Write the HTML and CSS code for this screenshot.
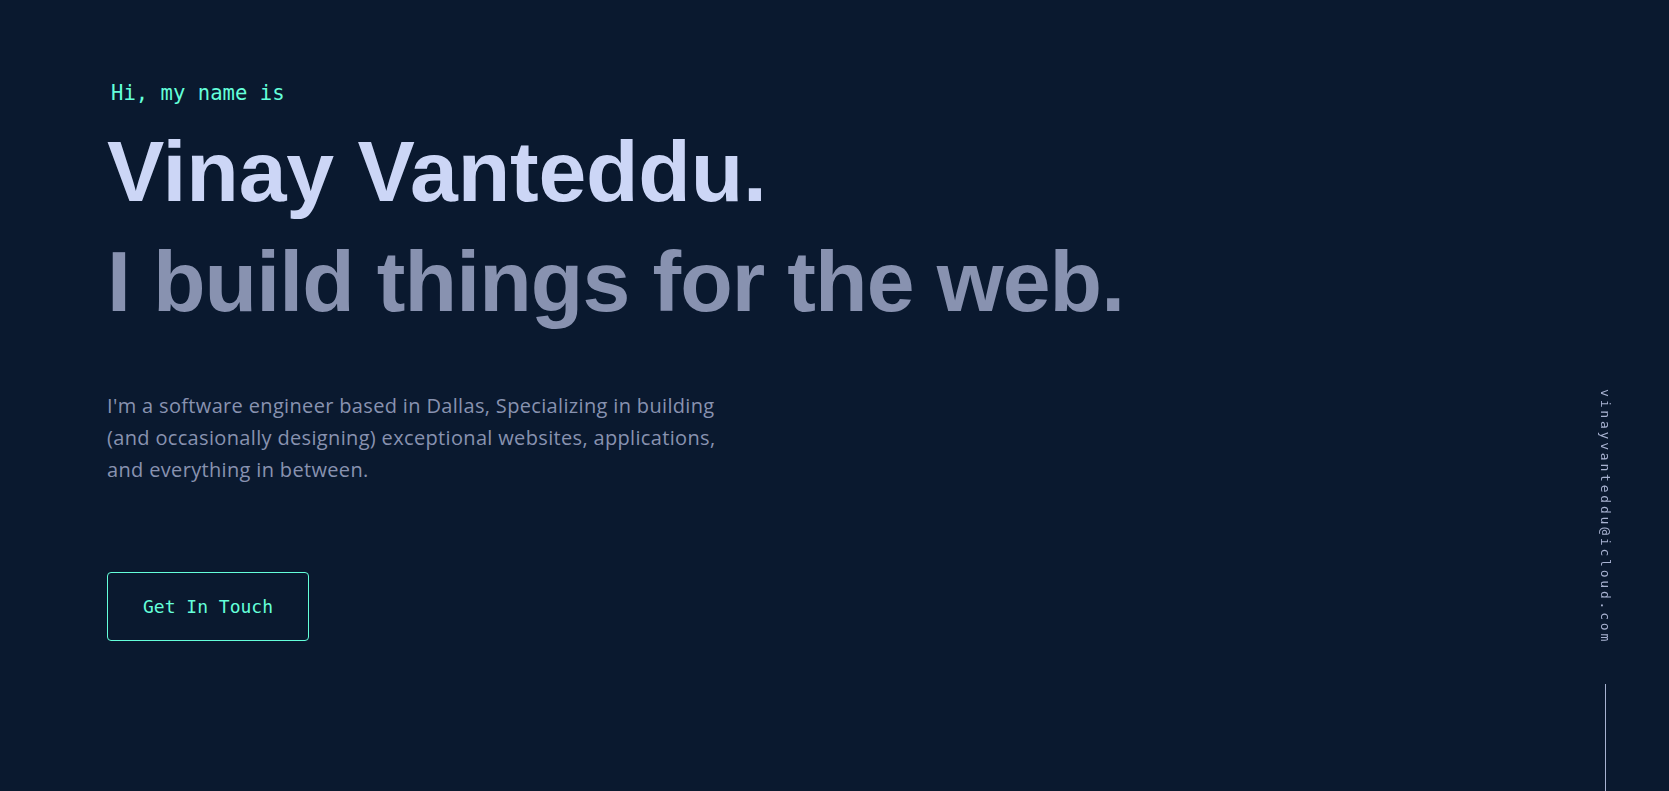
FILE: index.html
```html
<!DOCTYPE html>
<html lang="en">
<head>
<meta charset="utf-8">
<title>Vinay Vanteddu</title>
<link rel="stylesheet" href="styles.css">
</head>
<body>
<main class="hero">
  <h1 class="hero-intro">Hi, my name is</h1>
  <h2 class="big-heading name">Vinay Vanteddu.</h2>
  <h3 class="big-heading tagline">I build things for the web.</h3>
  <p class="hero-text">I'm a software engineer based in Dallas, Specializing in building (and occasionally designing) exceptional websites, applications, and everything in between.</p>
  <a class="contact-btn" href="#contact">Get In Touch</a>
</main>
<aside class="side-email">
  <a class="email-link" href="#">vinayvanteddu@icloud.com</a>
</aside>
</body>
</html>
```

FILE: styles.css
```css
html, body {
  margin: 0;
  padding: 0;
}

body {
  background: #0a192f;
  min-height: 100vh;
  overflow: hidden;
  font-family: "Liberation Sans", Arial, sans-serif;
  color: #8892b0;
}

.hero {
  display: flex;
  flex-direction: column;
  align-items: flex-start;
  padding: 80px 0 0 107px;
}

.hero-intro {
  margin: 0 0 10px 4px;
  font-family: "DejaVu Sans Mono", monospace;
  font-weight: 400;
  font-size: 20.6px;
  line-height: 26px;
  color: #64ffda;
}

.big-heading {
  margin: 0;
  font-family: "Liberation Sans", Arial, sans-serif;
  font-weight: 700;
  font-size: 86px;
  line-height: 110px;
}

.name {
  color: #ccd6f6;
  letter-spacing: -0.2px;
}

.tagline {
  color: #8892b0;
  letter-spacing: -0.9px;
}

.hero-text {
  margin: 54px 0 0 0;
  max-width: 640px;
  font-family: "Open Sans", sans-serif;
  font-size: 20px;
  line-height: 32px;
  letter-spacing: 0.34px;
  color: #8892b0;
}

.contact-btn {
  margin-top: 86px;
  padding: 23px 35px;
  border: 1px solid #64ffda;
  border-radius: 4px;
  font-family: "DejaVu Sans Mono", monospace;
  font-size: 18px;
  line-height: 21px;
  color: #64ffda;
  text-decoration: none;
}

.side-email {
  position: fixed;
  right: 44px;
  bottom: 0;
  width: 40px;
  display: flex;
  flex-direction: column;
  align-items: center;
}

.email-link {
  writing-mode: vertical-rl;
  font-family: "DejaVu Sans Mono", monospace;
  font-size: 13px;
  line-height: 18px;
  letter-spacing: 2.8px;
  color: #a8b2d1;
  text-decoration: none;
  margin-bottom: 40px;
}

.side-email::after {
  content: "";
  display: block;
  width: 1px;
  height: 107px;
  background: #a8b2d1;
}
```
